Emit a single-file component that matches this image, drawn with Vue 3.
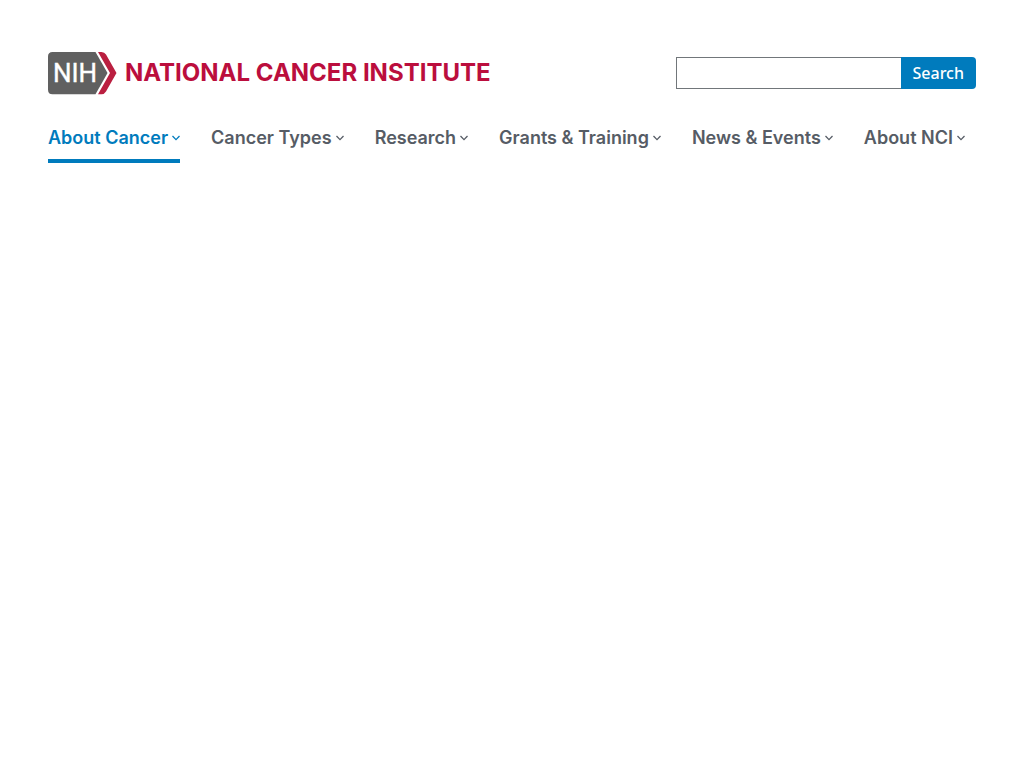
<script setup>
const items = [
  { label: 'About Cancer', current: true },
  { label: 'Cancer Types' },
  { label: 'Research' },
  { label: 'Grants & Training' },
  { label: 'News & Events' },
  { label: 'About NCI' },
]
</script>

<template>
  <header class="header">
    <div class="top">
      <a class="brand" href="#" aria-label="NIH National Cancer Institute">
        <svg class="mark" viewBox="0 0 69 44" aria-hidden="true">
          <path d="M4.500 1H47.500L59.500 22L47.500 43.300H4.500Q0 43.300 0 38.800V5.500Q0 1 4.500 1Z" fill="#606060" />
          <path d="M50 1H53.500Q56.500 1 58 3.600L68.500 22L58 40.600Q56.500 43.300 53.500 43.300H50L62 22Z" fill="#ba1f40" />
          <text class="nih" x="5" y="31">NIH</text>
        </svg>
        <span class="name">NATIONAL CANCER INSTITUTE</span>
      </a>
      <form class="search" role="search" @submit.prevent>
        <input class="field" type="search" aria-label="Search" />
        <button class="submit" type="submit">Search</button>
      </form>
    </div>
    <nav class="nav" aria-label="Primary">
      <button
        v-for="item in items"
        :key="item.label"
        type="button"
        class="item"
        :class="{ current: item.current }"
      >
        <span>{{ item.label }}</span>
        <svg class="chevron" viewBox="0 0 8 6" aria-hidden="true">
          <path d="M0.500 1L4 4.600L7.500 1" fill="none" stroke="currentColor" stroke-width="1.300" />
        </svg>
      </button>
    </nav>
  </header>
</template>

<style>
body {
  background: #fff;
}
</style>

<style scoped>
.header {
  padding: 51px 48px 0;
}
.top {
  display: flex;
  align-items: center;
  justify-content: space-between;
}
.brand {
  display: flex;
  align-items: center;
  gap: 8px;
  color: #bb0e3d;
  text-decoration: none;
  white-space: nowrap;
}
.mark {
  width: 69px;
  height: 44px;
}
.nih {
  font: 400 26px Roboto, sans-serif;
  fill: #fff;
  stroke: #fff;
  stroke-width: 0.4;
}
.name {
  font: 700 24px/44px Inter, sans-serif;
}
.search {
  display: flex;
  width: 300px;
}
.field {
  flex: 1;
  min-width: 0;
  height: 32px;
  box-sizing: border-box;
  margin: 0;
  padding: 0 8px;
  border: 1px solid #71767a;
  border-right: 0;
  border-radius: 0;
  background: #fff;
  font: 16px "Open Sans", sans-serif;
  appearance: none;
}
.submit {
  height: 32px;
  padding: 0 12px;
  border: 0;
  border-radius: 0 4px 4px 0;
  background: #007bbd;
  color: #fff;
  font: 500 16px/32px "Noto Sans", sans-serif;
}
.nav {
  display: flex;
  gap: 31px;
  margin-top: 20px;
}
.item {
  display: flex;
  align-items: center;
  gap: 4px;
  height: 48px;
  padding: 2px 0 0;
  border: 0;
  border-bottom: 4px solid transparent;
  background: none;
  color: #565c65;
  font: 600 18px/24px Inter, sans-serif;
  white-space: nowrap;
}
.current {
  border-color: #007bbd;
  color: #007bbd;
}
.chevron {
  width: 8px;
  height: 6px;
}
</style>
